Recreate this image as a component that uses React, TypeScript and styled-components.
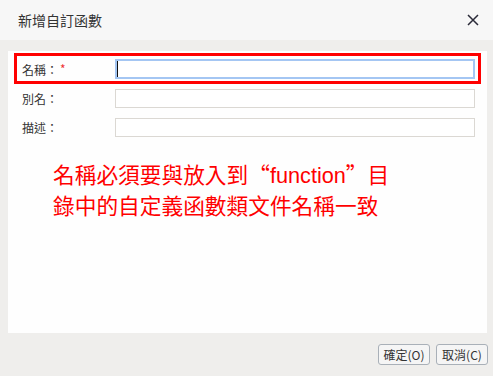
import styled, { createGlobalStyle } from "styled-components";

const GlobalStyle = createGlobalStyle`
  html, body {
    margin: 0;
    padding: 0;
  }
  body {
    font-family: "Noto Sans CJK TC", "Liberation Sans", sans-serif;
    color: #333;
  }
`;

const Dialog = styled.div`
  width: 493px;
  height: 376px;
  display: flex;
  flex-direction: column;
  background: #efeeec;
  overflow: hidden;
`;

const Header = styled.div`
  height: 40px;
  flex: none;
  display: flex;
  align-items: center;
  justify-content: space-between;
  padding: 0 14px 0 18px;
  background: #f7f7f7;
`;

const Title = styled.div`
  font-size: 14px;
  color: #333;
  line-height: 40px;
`;

const CloseButton = styled.button`
  width: 12px;
  height: 12px;
  padding: 0;
  border: 0;
  background: none;
  display: flex;
  cursor: pointer;
`;

const Body = styled.div`
  flex: 1;
  padding: 11px 6px 0 8px;
  display: flex;
`;

const Panel = styled.div`
  flex: 1;
  background: #fefefe;
  padding-top: 2px;
`;

const Highlight = styled.div`
  margin: 0 6px;
  border: 3px solid #ff0000;
  display: flex;
  align-items: center;
  padding-left: 5px;
  padding-top: 1px;
  box-sizing: border-box;
  height: 31px;
`;

const Row = styled.div`
  height: 29px;
  display: flex;
  align-items: center;
  padding-left: 14px;
`;

const Label = styled.label`
  width: 93px;
  flex: none;
  font-size: 12px;
  color: #333;
  display: flex;
  align-items: center;
`;

const Required = styled.span`
  color: #ee3333;
  font-size: 12px;
  margin-left: 2px;
  position: relative;
  top: -1px;
`;

const FieldWrap = styled.div`
  position: relative;
  display: flex;
`;

const Caret = styled.span`
  position: absolute;
  left: 2px;
  top: 2px;
  width: 1px;
  height: 16px;
  background: #111;
`;

const Field = styled.input<{ $active?: boolean }>`
  width: 360px;
  height: ${(p) => (p.$active ? "20px" : "19px")};
  box-sizing: border-box;
  border: ${(p) => (p.$active ? "2px solid #a4c6f3" : "1px solid #dbd8d3")};
  background: #fff;
  outline: none;
  padding: 0 1px;
  font-size: 12px;
  font-family: inherit;
  caret-color: transparent;
`;

const Message = styled.div`
  margin: 17px 0 0 45px;
  font-size: 21.7px;
  line-height: 29px;
  color: #ff0000;
  white-space: nowrap;
`;

const Latin = styled.span`
  font-family: "Liberation Sans", sans-serif;
`;

const Footer = styled.div`
  height: 43px;
  flex: none;
  display: flex;
  align-items: center;
  justify-content: flex-end;
  gap: 6px;
  padding-right: 5px;
`;

const Button = styled.button`
  width: 52px;
  height: 21px;
  padding: 0;
  box-sizing: border-box;
  border: 1px solid #a9b0b8;
  border-radius: 3px;
  background: #f5f5f5;
  font-family: inherit;
  font-size: 12px;
  color: #333;
  line-height: 19px;
`;

export default function App() {
  return (
    <Dialog>
      <GlobalStyle />
      <Header>
        <Title>新增自訂函數</Title>
        <CloseButton aria-label="close">
          <svg width="12" height="12" viewBox="0 0 12 12">
            <path d="M1 1L11 11M11 1L1 11" stroke="#2a2a38" strokeWidth="1.5" />
          </svg>
        </CloseButton>
      </Header>
      <Body>
        <Panel>
          <Highlight>
            <Label>
              名稱：<Required>*</Required>
            </Label>
            <FieldWrap>
              <Field $active />
              <Caret />
            </FieldWrap>
          </Highlight>
          <Row>
            <Label>別名：</Label>
            <Field />
          </Row>
          <Row>
            <Label>描述：</Label>
            <Field />
          </Row>
          <Message>
            名稱必須要與放入到“<Latin>function</Latin>”目
            <br />
            錄中的自定義函數類文件名稱一致
          </Message>
        </Panel>
      </Body>
      <Footer>
        <Button>確定(O)</Button>
        <Button>取消(C)</Button>
      </Footer>
    </Dialog>
  );
}
